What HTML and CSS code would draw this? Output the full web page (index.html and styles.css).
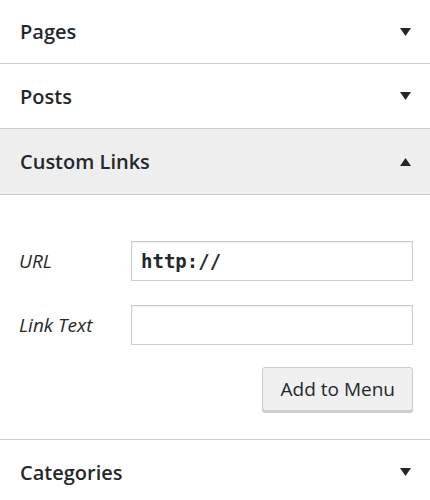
FILE: index.html
```html
<!DOCTYPE html>
<html>
<head>
<meta charset="utf-8">
<link rel="stylesheet" href="styles.css">
</head>
<body>
<div class="accordion">
  <div class="section">
    <div class="title title-first"><span>Pages</span>
      <svg class="arrow" width="11" height="8" viewBox="0 0 11 8"><polygon points="0,0 11,0 5.5,8" fill="#23282d"/></svg>
    </div>
  </div>
  <div class="section">
    <div class="title"><span>Posts</span>
      <svg class="arrow" width="11" height="8" viewBox="0 0 11 8"><polygon points="0,0 11,0 5.5,8" fill="#23282d"/></svg>
    </div>
  </div>
  <div class="section open">
    <div class="title title-open"><span>Custom Links</span>
      <svg class="arrow" width="11" height="8" viewBox="0 0 11 8"><polygon points="0,8 11,8 5.5,0" fill="#23282d"/></svg>
    </div>
    <div class="content">
      <div class="form">
        <label class="label">URL</label>
        <div class="input mono">http://</div>
        <label class="label">Link Text</label>
        <div class="input"></div>
      </div>
      <div class="actions"><button class="button">Add to Menu</button></div>
    </div>
  </div>
  <div class="section">
    <div class="title"><span>Categories</span>
      <svg class="arrow" width="11" height="8" viewBox="0 0 11 8"><polygon points="0,0 11,0 5.5,8" fill="#23282d"/></svg>
    </div>
  </div>
</div>
</body>
</html>
```
FILE: styles.css
```css
html, body {
  margin: 0;
  padding: 0;
  background: #fff;
}
body {
  font-family: "Open Sans", "Noto Sans", sans-serif;
  color: #23282d;
  overflow: hidden;
}
.section {
  border-bottom: 1px solid #cccccc;
}
.title {
  height: 64px;
  display: flex;
  align-items: center;
  justify-content: space-between;
  padding: 0 19px 0 20px;
  font-size: 20px;
  font-weight: 600;
}
.title-first {
  height: 63px;
}
.title-open {
  height: 65px;
  background: #eeeeee;
}
.arrow {
  display: block;
}
.content {
  border-top: 1px solid #cccccc;
  padding: 46px 17px 28px 19px;
}
.form {
  display: grid;
  grid-template-columns: 112px 1fr;
  row-gap: 24px;
  align-items: center;
}
.label {
  font-style: italic;
  font-size: 19px;
}
.input {
  height: 38px;
  border: 1px solid #cccccc;
  box-shadow: inset 0 1px 2px rgba(0,0,0,0.07);
  box-sizing: content-box;
  display: flex;
  align-items: center;
  padding: 0 9px;
}
.mono {
  font-family: "DejaVu Sans Mono", monospace;
  font-size: 19px;
  font-weight: 600;
  color: #23282d;
}
.actions {
  display: flex;
  justify-content: flex-end;
  margin-top: 22px;
}
.button {
  height: 44px;
  padding: 0 17px 0 18px;
  font-family: "Open Sans", "Noto Sans", sans-serif;
  font-size: 19px;
  color: #23282d;
  background: #f0f0f0;
  border: 1px solid #cccccc;
  border-radius: 3px;
  box-shadow: 0 2px 0 #cccccc;
}
```
